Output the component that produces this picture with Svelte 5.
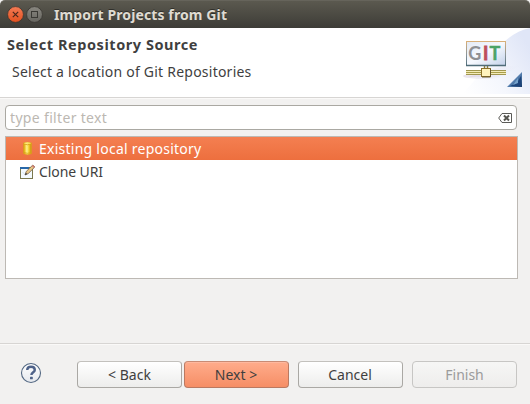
<script>
  const title = 'Import Projects from Git';
  let filter = $state('');
  let selected = $state('local');
  const sources = [
    { id: 'local', label: 'Existing local repository' },
    { id: 'uri', label: 'Clone URI' }
  ];
</script>

<main class="dialog">
  <div class="titlebar">
    <svg class="controls" width="46" height="28" viewBox="0 0 46 28">
      <defs>
        <linearGradient id="close" x2="0" y2="1"><stop stop-color="#f47b55" /><stop offset="1" stop-color="#e3511f" /></linearGradient>
        <linearGradient id="max" x2="0" y2="1"><stop stop-color="#898780" /><stop offset="1" stop-color="#66655f" /></linearGradient>
      </defs>
      <circle cx="15.5" cy="14.5" r="7.9" fill="url(#close)" stroke="#33312c" stroke-width=".7" />
      <path d="M12.8 11.8l5.4 5.4M18.2 11.8l-5.4 5.4" stroke="#4a271b" stroke-width="1.2" />
      <circle cx="34.5" cy="14.5" r="7.9" fill="url(#max)" stroke="#33312c" stroke-width=".7" />
      <rect x="31.5" y="11.5" width="6" height="6" fill="none" stroke="#3a3934" stroke-width="1" />
    </svg>
    <span class="title">{title}</span>
  </div>

  <header>
    <div class="heading">
      <h1>Select Repository Source</h1>
      <p>Select a location of Git Repositories</p>
    </div>
    <svg class="banner" width="90" height="66" viewBox="0 0 90 66">
      <defs>
        <linearGradient id="sweep" x1="0" y1=".9" x2="1" y2=".3"><stop stop-color="#fff" /><stop offset=".45" stop-color="#f5f7fd" /><stop offset="1" stop-color="#e0e6f7" /></linearGradient>
        <linearGradient id="screen" x2="1" y2="1"><stop stop-color="#e3eaf6" /><stop offset=".5" stop-color="#f6f9fe" /><stop offset="1" stop-color="#c3d1e9" /></linearGradient>
        <linearGradient id="frame" x2="0" y2="1"><stop stop-color="#d9b079" /><stop offset=".55" stop-color="#8a9499" /><stop offset="1" stop-color="#52707d" /></linearGradient>
        <linearGradient id="shade" x2="1"><stop stop-color="#cdbfd2" stop-opacity=".45" /><stop offset="1" stop-color="#cbc7dd" stop-opacity="0" /></linearGradient>
        <linearGradient id="cast" x2="1"><stop stop-color="#cdbfd2" stop-opacity=".7" /><stop offset="1" stop-color="#dcdcee" stop-opacity="0" /></linearGradient>
        <linearGradient id="corner" x2="1" y2="1"><stop stop-color="#b6cceb" /><stop offset=".55" stop-color="#527cac" /><stop offset="1" stop-color="#153969" /></linearGradient>
      </defs>
      <path d="M20 66C38 55 51 24 65 13C73 6 81 2 90 0V66Z" fill="url(#sweep)" />
      <path d="M64 38H81L58 49H28Z" fill="url(#cast)" opacity=".55" />
      <ellipse cx="44" cy="48" rx="21" ry="3" fill="url(#shade)" />
      <rect x="26.5" y="13.5" width="39" height="24" fill="url(#screen)" stroke="url(#frame)" />
      <path d="M26 37.5H66" stroke="#4f6c78" stroke-width="1.4" />
      <g class="git"><text x="28.3" y="32" fill="#8e9094">G</text><text x="43" y="32" fill="#be4e5b" stroke="#be4e5b" stroke-width=".8">I</text><text x="49.4" y="32" fill="#4ba467" stroke="#4ba467" stroke-width=".5">T</text></g>
      <path d="M44.5 38v4M47.5 38v4" stroke="#817b43" stroke-width="1.4" />
      <path d="M26 42.5H66M26 46.5H66" stroke="#a2974f" />
      <path d="M26 43.5H66M26 45.5H66" stroke="#f3ebb8" />
      <path d="M26 44.5H66" stroke="#a99e49" />
      <rect x="41.5" y="40.5" width="9" height="8" fill="#fff3bd" stroke="#8c7129" />
      <path d="M50.5 41v8H42" fill="none" stroke="#66572b" />
      <path d="M82 44V59H67Z" fill="url(#corner)" />
      <path d="M81 48V58H70L77 55Z" fill="#1d447b" />
      <path d="M78 50v5l-5 2Z" fill="#75a2cb" />
    </svg>
  </header>

  <section class="content">
    <label class="search">
      <input aria-label="type filter text" placeholder="type filter text" bind:value={filter} />
      <svg width="14" height="10" viewBox="0 0 14 10">
        <path d="M4 .5H13.5V9.5H4L.7 5Z" fill="none" stroke="#5a5a57" />
        <path d="M6 2.5l5 5M11 2.5l-5 5" stroke="#555550" stroke-width="2" />
      </svg>
    </label>
    <div class="list" role="listbox" aria-label="Repository source">
      {#each sources as source}
        <button class="row" class:selected={selected === source.id} role="option" aria-selected={selected === source.id} onclick={() => (selected = source.id)}>
          {#if source.id === 'local'}
            <svg width="16" height="16" viewBox="0 0 16 16">
              <defs><linearGradient id="gold"><stop stop-color="#c78a0d" /><stop offset=".18" stop-color="#f1c72a" /><stop offset=".42" stop-color="#fff391" /><stop offset=".7" stop-color="#f2ca22" /><stop offset="1" stop-color="#bf8513" /></linearGradient></defs>
              <path d="M3.5 2Q7.5 .5 11.5 2V12.5Q7.5 14.8 3.5 12.5Z" fill="url(#gold)" stroke="#dda31b" stroke-width=".7" />
              <path d="M4 3Q7.5 4.5 11 3M4 11.6Q7.5 13 11 11.6" fill="none" stroke="#d69f18" stroke-width=".8" />
              <path d="M4.5 2.3Q7.5 1.5 10.5 2.3" fill="none" stroke="#ffec78" />
            </svg>
          {:else}
            <svg width="16" height="16" viewBox="0 0 16 16">
              <rect x=".5" y="3.5" width="12" height="11" fill="#f3faff" stroke="#7a784e" />
              <path d="M0 4H9" stroke="#2868a9" stroke-width="2" />
              <path d="M2.5 8l2.3 2.5L8 8" fill="none" stroke="#d5e8f0" />
              <path d="M5 11l1.2-3.5L12.8 1l2 2-6.6 6.6Z" fill="#e7c786" stroke="#735e49" stroke-width=".8" />
              <path d="M11.8 2l1-1 2 2-1 1Z" fill="#d37a74" />
              <path d="M5 11l1-2 1.2 1Z" fill="#222f3c" />
            </svg>
          {/if}
          <span class:uri={source.id === 'uri'}>{source.label}</span>
        </button>
      {/each}
    </div>
  </section>

  <footer>
    <button class="help" aria-label="Help">
      <svg width="22" height="22" viewBox="0 0 22 22">
        <defs><linearGradient id="help" x2="0" y2="1"><stop stop-color="#fff" /><stop offset="1" stop-color="#e5e8ed" /></linearGradient></defs>
        <circle cx="11" cy="11" r="9.5" fill="url(#help)" stroke="#526782" stroke-width="1.1" />
        <path d="M7.2 8C7.3 5.6 8.8 4.8 11 4.8C13.3 4.8 14.8 6 14.8 7.9C14.8 10.3 11.4 10.2 11.4 13" fill="none" stroke="#4e6289" stroke-width="2.4" />
        <rect x="10" y="14.8" width="2.8" height="2.5" rx=".6" fill="#4e6289" />
      </svg>
    </button>
    <div class="actions">
      <button class="action"><span>&lt; Back</span></button>
      <button class="action next"><span>Next &gt;</span></button>
      <button class="action cancel"><span>Cancel</span></button>
      <button class="action finish" disabled><span>Finish</span></button>
    </div>
  </footer>
</main>

<style>
  :global(body) { margin: 0; background: #f2f1f0; }
  .dialog { width: 530px; height: 404px; display: flex; flex-direction: column; overflow: hidden; background: #f2f1f0; color: #3f3f3f; font: 14px/20px "Noto Sans", "Open Sans", sans-serif; }
  button, input { font: inherit; color: inherit; }
  svg { display: block; flex: none; }
  .titlebar { height: 28px; flex: none; display: flex; align-items: center; box-sizing: border-box; background: linear-gradient(#5b594f, #3d3c37); border-top: 1px solid #66645b; border-radius: 5px 5px 0 0; color: #dfdbd2; font-weight: 700; }
  .controls { margin-top: -1px; }
  .title { margin: 1px 0 0 8px; letter-spacing: .11px; white-space: nowrap; text-shadow: 0 -1px #302f2a; }
  header { height: 69px; flex: none; display: flex; justify-content: space-between; background: #fff; border-bottom: 1px solid #d7d5d3; }
  .heading { padding: 6px 0 0 7px; }
  h1 { margin: 0; font-size: 14.5px; line-height: 20px; letter-spacing: .55px; }
  p { margin: 8px 0 0 5px; letter-spacing: .23px; }
  .git { font: bold 18px Lato, sans-serif; }
  .content { height: 246px; flex: none; box-sizing: border-box; padding: 6px 12px 0 5px; border-bottom: 1px solid #d7d5d3; border-top: 1px solid #faf9f8; }
  .search { width: 512px; height: 25px; box-sizing: border-box; display: flex; align-items: center; background: #fff; border: 1px solid #aaa8a2; border-radius: 4px; padding-right: 4px; }
  input { border: 0; outline: 0; background: none; padding: 0 0 0 4px; flex: 1; min-width: 0; height: 22px; letter-spacing: .33px; }
  input::placeholder { color: #bcb8b2; opacity: 1; }
  .list { width: 513px; height: 143px; margin-top: 6px; box-sizing: border-box; background: #fff; border: 1px solid #bdb9b4; }
  .row { display: flex; align-items: center; width: 100%; height: 23px; padding: 0 0 0 14px; border: 0; background: none; text-align: left; }
  .row span { margin-left: 3px; white-space: nowrap; letter-spacing: .25px; }
  .row .uri { letter-spacing: -.1px; }
  .row.selected { color: #fff; background: linear-gradient(#f47f51, #ed6f3e); }
  footer { height: 60px; flex: none; display: flex; align-items: center; border-top: 1px solid #faf9f8; box-sizing: border-box; }
  .help { border: 0; background: none; padding: 0; margin: -3px 46px 0 20px; width: 22px; }
  .actions { display: flex; gap: 2px; margin: 0 0 0 -11px; }
  .action { width: 105px; height: 27px; box-sizing: border-box; padding: 1px 0 0; background: linear-gradient(#fff, #ededec); border: 1px solid #aaa8a4; border-top-color: #c3c1bd; border-radius: 4px; box-shadow: inset 0 1px #fff; }
  .next { padding-right: 1px; background: linear-gradient(#ffac8b, #f68e66); border-color: #ba7961; border-top-color: #c98b74; box-shadow: inset 0 1px #ffb89e; }
  .cancel { margin-left: 7px; padding-right: 1px; }
  .finish { margin-left: 7px; color: #9b9b9b; background: linear-gradient(#f6f6f5, #eeedec); border-color: #c7c6c4; box-shadow: none; }
</style>
